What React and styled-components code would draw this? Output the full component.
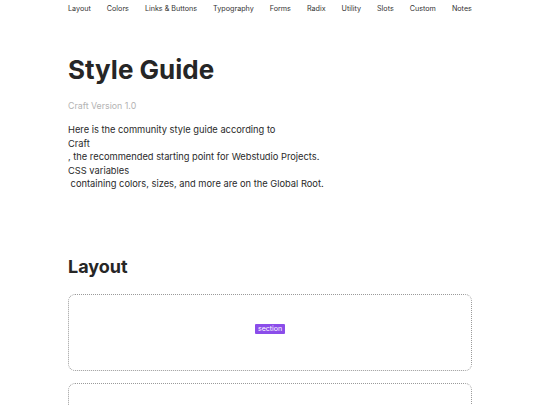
import React from "react"
import styled, { createGlobalStyle } from "styled-components"

const GlobalStyle = createGlobalStyle`
  body {
    margin: 0;
    background: #ffffff;
    font-family: Inter, "Noto Sans", sans-serif;
    color: #222222;
  }
`

const navItems = [
  "Layout",
  "Colors",
  "Links & Buttons",
  "Typography",
  "Forms",
  "Radix",
  "Utility",
  "Slots",
  "Custom",
  "Notes",
]

const App = () => (
  <>
    <GlobalStyle />
    <Page>
      <Nav>
        {navItems.map(item => (
          <NavLink key={item}>{item}</NavLink>
        ))}
      </Nav>
      <Hero>
        <Title>Style Guide</Title>
        <Version>Craft Version 1.0</Version>
        <Intro>
          Here is the community style guide according to
          <br />
          Craft
          <br />
          , the recommended starting point for Webstudio Projects.
          <br />
          CSS variables
          <br />
          &nbsp;containing colors, sizes, and more are on the Global Root.
        </Intro>
      </Hero>
      <Section>
        <SectionTitle>Layout</SectionTitle>
        <Stack>
          <DemoBox>
            <Tag>section</Tag>
          </DemoBox>
          <DemoBox />
        </Stack>
      </Section>
    </Page>
  </>
)

export default App

const Page = styled.div`
  width: 404px;
  margin: 0 auto;
`

const Nav = styled.nav`
  display: flex;
  justify-content: space-between;
  align-items: center;
  height: 17px;
`

const NavLink = styled.a`
  font-size: 7.2px;
  color: #333333;
  white-space: nowrap;
`

const Hero = styled.header`
  padding-top: 37px;
  display: flex;
  flex-direction: column;
`

const Title = styled.h1`
  margin: 0;
  font-size: 26px;
  font-weight: 700;
  line-height: 32px;
  color: #262626;
`

const Version = styled.p`
  margin: 14px 0 0;
  font-size: 8.8px;
  color: #b3b3b3;
`

const Intro = styled.p`
  margin: 12px 0 0;
  font-size: 9.3px;
  line-height: 13.5px;
  color: #2a2a2a;
`

const Section = styled.section`
  padding-top: 65px;
`

const SectionTitle = styled.h2`
  margin: 0 0 16px;
  font-size: 18px;
  font-weight: 700;
  line-height: 22px;
  color: #262626;
`

const Stack = styled.div`
  display: flex;
  flex-direction: column;
  gap: 12px;
`

const DemoBox = styled.div`
  height: 69px;
  padding-bottom: 6px;
  border: 1px dotted #9a9a9a;
  border-radius: 7px;
  display: flex;
  align-items: center;
  justify-content: center;
`

const Tag = styled.span`
  background: #8b4dea;
  color: #ffffff;
  font-size: 7px;
  line-height: 10px;
  padding: 0 3px;
  border-radius: 1px;
`
